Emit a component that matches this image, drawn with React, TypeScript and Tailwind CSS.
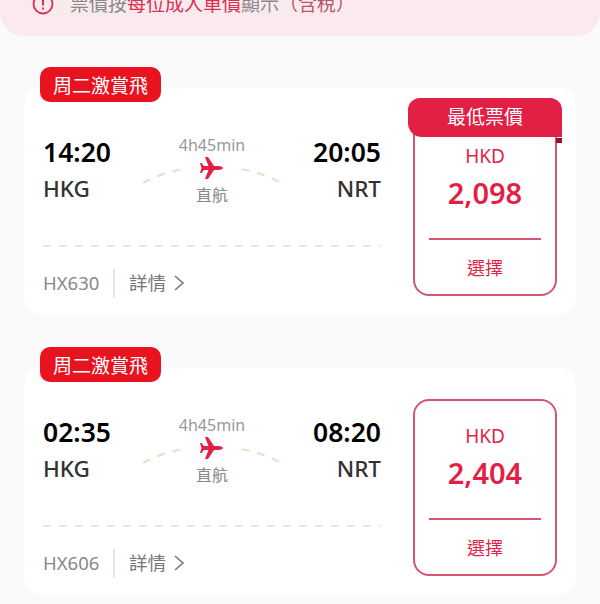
const FONT = '"Noto Sans", "Noto Sans CJK TC", sans-serif';

function Plane() {
  return (
    <svg width="142" height="27" viewBox="0 0 142 27" className="block mt-[1px]">
      <path d="M2 26 Q 22 15 47 11" fill="none" stroke="#eddcc8" strokeWidth="2" strokeDasharray="8 8" />
      <path d="M138 25 Q 118 14 92 11" fill="none" stroke="#eddcc8" strokeWidth="2" strokeDasharray="8 8" />
      <path
        d="M82 11 C82 9.8 79 9 76 9 L73 9 L67 0 L64 0 L67.5 9 L63 9 L60.5 6 L59 6 L60.5 11 L59 16 L60.5 16 L63 13 L67.5 13 L64 22 L67 22 L73 13 L76 13 C79 13 82 12.2 82 11 Z"
        fill="#e21f45"
      />
    </svg>
  );
}

function Flight({ dep, arr, no, price, lowest }: { dep: string; arr: string; no: string; price: string; lowest?: boolean }) {
  return (
    <div className="relative bg-white rounded-[20px] w-[552px] h-[228px] ml-6 flex">
      <div className="absolute left-4 -top-5 w-[121px] h-[35px] pt-[3px] bg-[#e8131f] rounded-[10px] flex items-center justify-center text-white text-[19px]">
        周二激賞飛
      </div>
      <div className="w-[389px] pl-[19px] pr-[32px] flex flex-col">
        <div className="flex justify-between pt-[48px] h-[158px]">
          <div>
            <div className="text-[26.5px] leading-[34px] font-semibold text-black">{dep}</div>
            <div className="text-[22.5px] leading-[30px] font-medium text-[#333] mt-[5px]">HKG</div>
          </div>
          <div className="flex flex-col items-center -mt-[1px]">
            <div className="text-[16px] leading-[22px] text-[#999]">4h45min</div>
            <Plane />
            <div className="text-[16px] leading-[22px] text-[#888]">直航</div>
          </div>
          <div className="text-right">
            <div className="text-[26.5px] leading-[34px] font-semibold text-black">{arr}</div>
            <div className="text-[22.5px] leading-[30px] font-medium text-[#333] mt-[5px]">NRT</div>
          </div>
        </div>
        <div className="h-[2px] bg-[repeating-linear-gradient(90deg,#e8e8e8_0,#e8e8e8_8px,transparent_8px,transparent_16px)]" />
        <div className="flex items-center mt-[21px] text-[18.5px] text-[#888]">
          <span className="w-[70px] leading-[30px]">{no}</span>
          <span className="w-[2px] h-[29px] bg-[#e6e6e6]" />
          <span className="ml-[14px] leading-[30px] text-[#777]">詳情</span>
          <svg width="12" height="18" viewBox="0 0 12 18" className="ml-[7px]">
            <path d="M2 2 L10 9 L2 16" fill="none" stroke="#777" strokeWidth="1.6" />
          </svg>
        </div>
      </div>
      <div className="relative mt-[32px] w-[144px] h-[177px] border-2 border-[#d4566f] rounded-[16px] flex flex-col items-center">
        {lowest && (
          <>
            <div className="absolute -left-[7px] -top-[23px] w-[154px] h-[39px] bg-[#e21f45] rounded-t-[12px] rounded-bl-[14px] flex items-center justify-center text-white text-[19px]">
              最低票價
            </div>
            <div className="absolute -right-[7px] top-[17px] w-[6px] h-[5px] bg-[#8f1230]" />
          </>
        )}
        <div className="mt-[22px] text-[19px] leading-[26px] text-[#e21f45]">HKD</div>
        <div className="mt-[5px] text-[29px] leading-[38px] font-semibold text-[#e21f45]">{price}</div>
        <div className="mt-[26px] w-[112px] h-[2px] bg-[#d4566f]" />
        <div className="mt-[15px] text-[18px] leading-[26px] text-[#e21f45]">選擇</div>
      </div>
    </div>
  );
}

export default function App() {
  return (
    <div className="w-[600px] h-[604px] overflow-hidden bg-[#fafafa]" style={{ fontFamily: FONT }}>
      <div className="h-[36px] bg-[#fbeaed] rounded-b-[24px] overflow-hidden flex items-start pl-[32px] text-[19px] leading-[24px]">
        <div className="flex items-center -mt-[8px]">
          <svg width="22" height="22" viewBox="0 0 22 22">
            <circle cx="11" cy="11" r="9.5" fill="none" stroke="#d9304f" strokeWidth="1.8" />
            <path d="M11 5.5 V12.5 M11 14.5 V16.5" stroke="#d9304f" strokeWidth="2" />
          </svg>
          <span className="ml-[16px] text-[#888]">
            票價按<span className="text-[#d9304f]">每位成人單價</span>顯示<span className="text-[#b5566c]">（含稅）</span>
          </span>
        </div>
      </div>
      <div className="mt-[51px] flex flex-col gap-[52px]">
        <Flight dep="14:20" arr="20:05" no="HX630" price="2,098" lowest />
        <Flight dep="02:35" arr="08:20" no="HX606" price="2,404" />
      </div>
    </div>
  );
}
